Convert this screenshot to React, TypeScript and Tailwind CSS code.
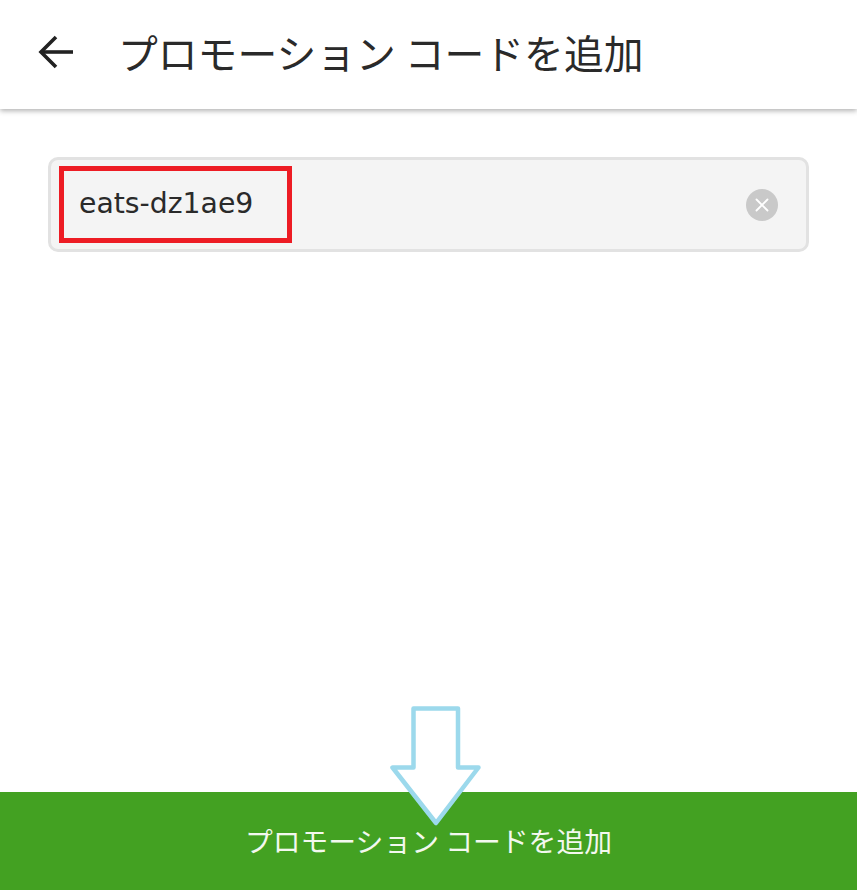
import { X } from 'lucide-react';

const cjkSans = 'font-["Noto_Sans_CJK_JP","Noto_Sans_CJK_SC",sans-serif]';

export default function App() {
  return (
    <div className={`relative flex h-[890px] w-[857px] flex-col overflow-hidden bg-white ${cjkSans}`}>
      {/* Header */}
      <header className="flex h-[109px] shrink-0 items-center bg-white pb-[5px] pl-[37px] shadow-[0_2px_5px_rgba(0,0,0,0.3)]">
        <svg width="38" height="36" viewBox="0 0 38 36" fill="none" stroke="#222222" strokeWidth="3.6" strokeLinecap="butt" strokeLinejoin="miter">
          <path d="M36 18 H5" />
          <path d="M19 3 L4 18 L19 33" />
        </svg>
        <h1 className="ml-[43px] text-[39.8px] leading-none font-normal text-[#2a2a2a]">
          プロモーション コードを追加
        </h1>
      </header>

      {/* Code input */}
      <main className="flex-1 px-[48px] pt-[48px]">
        <div className="flex h-[95px] items-center justify-between rounded-[10px] border-[3px] border-[#e2e2e2] bg-[#f4f4f4] pr-[28px] pl-[8px]">
          <div className="flex h-[77px] w-[233px] items-center border-[5px] border-[#ed1c24] pl-[15px]">
            <span className="font-['DejaVu_Sans',sans-serif] text-[28.3px] text-[#2a2a2a]">eats-dz1ae9</span>
          </div>
          <button className="flex h-8 w-8 items-center justify-center rounded-full bg-[#c9c9c9]">
            <X className="h-[22px] w-[22px] text-white" strokeWidth={2} />
          </button>
        </div>
      </main>

      {/* Submit button */}
      <button className="flex h-[98px] shrink-0 items-center justify-center bg-[#43a122] text-[27.8px] text-[#f3f8ef]">
        プロモーション コードを追加
      </button>

      {/* Annotation arrow */}
      <svg className="absolute top-[700px] left-[385px]" width="100" height="130" viewBox="385 700 100 130">
        <path
          d="M413.5 708.5 H458 V767.5 H478.5 L436 823 L392.5 767.5 H413.5 Z"
          fill="#ffffff"
          stroke="#9cd9ec"
          strokeWidth="4.5"
          strokeLinejoin="round"
        />
      </svg>
    </div>
  );
}
